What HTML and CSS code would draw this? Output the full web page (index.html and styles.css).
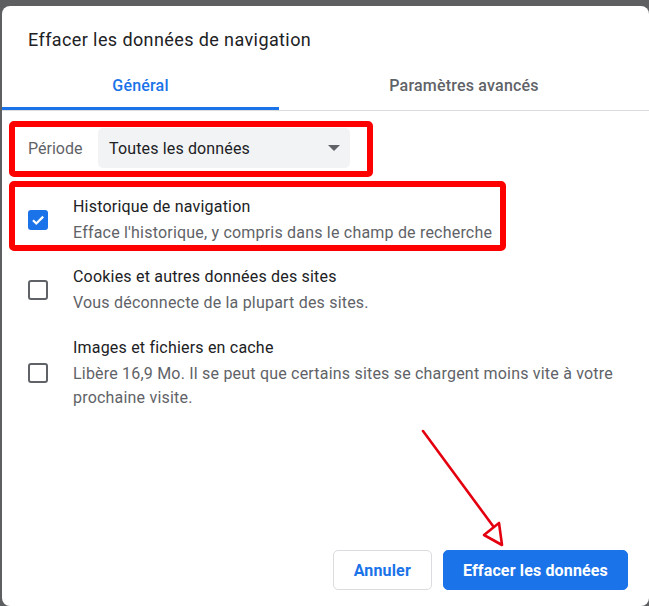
FILE: index.html
```html
<!DOCTYPE html>
<html lang="fr">
<head>
<meta charset="utf-8">
<title>Effacer les données de navigation</title>
<link rel="stylesheet" href="styles.css">
</head>
<body>
<div class="dialog">
  <h1 class="title">Effacer les données de navigation</h1>
  <div class="tabs">
    <div class="tab tab-active">Général</div>
    <div class="tab">Paramètres avancés</div>
  </div>

  <div class="mark mark-period">
    <div class="period">
      <span class="period-label">Période</span>
      <div class="select">
        <span>Toutes les données</span>
        <span class="caret"></span>
      </div>
    </div>
  </div>

  <div class="mark mark-history">
    <div class="row">
      <span class="checkbox checked">
        <svg viewBox="0 0 20 20" width="20" height="20"><path d="M5 10.2l3.3 3.3L15.2 6.6" fill="none" stroke="#fff" stroke-width="2.2"/></svg>
      </span>
      <div class="row-text">
        <div class="row-title">Historique de navigation</div>
        <div class="row-sub">Efface l'historique, y compris dans le champ de recherche</div>
      </div>
    </div>
  </div>

  <div class="row row-plain row-cookies">
    <span class="checkbox"></span>
    <div class="row-text">
      <div class="row-title">Cookies et autres données des sites</div>
      <div class="row-sub">Vous déconnecte de la plupart des sites.</div>
    </div>
  </div>

  <div class="row row-plain row-cache">
    <span class="checkbox"></span>
    <div class="row-text">
      <div class="row-title">Images et fichiers en cache</div>
      <div class="row-sub">Libère 16,9 Mo. Il se peut que certains sites se chargent moins vite à votre prochaine visite.</div>
    </div>
  </div>

  <div class="footer">
    <button class="btn btn-cancel">Annuler</button>
    <button class="btn btn-primary">Effacer les données</button>
  </div>
</div>

<svg class="arrow" viewBox="0 0 649 606" width="649" height="606">
  <line x1="423" y1="431" x2="493" y2="526" stroke="#e4000f" stroke-width="2.6" stroke-linecap="round"/>
  <polygon points="484,535 499,523 502,545" fill="none" stroke="#e4000f" stroke-width="2.6" stroke-linejoin="round"/>
</svg>
</body>
</html>
```

FILE: styles.css
```css
html, body {
  margin: 0;
  padding: 0;
}
body {
  background: #5d5f61;
  width: 649px;
  height: 606px;
  overflow: hidden;
  position: relative;
  font-family: Roboto, "Liberation Sans", sans-serif;
  color: #202124;
}
.dialog {
  margin: 6px 0 0 2px;
  width: 647px;
  height: 600px;
  background: #fff;
  border-radius: 8px;
  display: flex;
  flex-direction: column;
  box-sizing: border-box;
}
.title {
  margin: 0;
  padding: 22px 0 0 26px;
  font-size: 18px;
  letter-spacing: 0.4px;
  font-weight: 400;
  line-height: 24px;
  color: #202124;
}
.tabs {
  display: flex;
  border-bottom: 1px solid #dadce0;
}
.tab {
  flex: 1;
  text-align: center;
  font-size: 16px;
  letter-spacing: 0.2px;
  font-weight: 500;
  line-height: 20px;
  padding: 24px 0 11px;
  color: #5f6368;
  border-bottom: 3px solid transparent;
}
.tab-active {
  flex: 0 0 277px;
  color: #1a73e8;
  border-bottom-color: #1a73e8;
}
.mark {
  border: 6px solid #ff0000;
  border-radius: 5px;
  align-self: flex-start;
  margin-left: 7px;
}
.mark-period {
  margin-top: 10px;
  padding: 1px 17px 3px 13px;
}
.period {
  display: flex;
  align-items: center;
  height: 40px;
}
.period-label {
  font-size: 16px;
  color: #5f6368;
  width: 70px;
}
.select {
  width: 252px;
  height: 40px;
  box-sizing: border-box;
  background: #f1f3f4;
  border-radius: 5px;
  display: flex;
  align-items: center;
  justify-content: space-between;
  padding: 0 10px 0 11px;
  font-size: 16px;
  letter-spacing: 0.15px;
  color: #202124;
}
.caret {
  width: 0;
  height: 0;
  border-left: 6px solid transparent;
  border-right: 6px solid transparent;
  border-top: 6px solid #5f6368;
}
.mark-history {
  margin-top: 4px;
  padding: 8px 8px 0 13px;
}
.row {
  display: flex;
  align-items: center;
  gap: 25px;
}
.row-plain {
  padding-left: 26px;
  padding-right: 20px;
}
.row-cookies {
  margin-top: 14px;
}
.row-cache {
  margin-top: 21px;
}
.checkbox {
  flex: 0 0 20px;
  width: 20px;
  height: 20px;
  box-sizing: border-box;
  border: 2px solid #5f6368;
  border-radius: 3px;
  display: block;
}
.checkbox.checked {
  border: none;
  background: #1a73e8;
}
.checkbox svg {
  display: block;
}
.row-title {
  font-size: 16px;
  letter-spacing: 0.2px;
  line-height: 24px;
  margin-bottom: 2px;
  color: #202124;
}
.row-sub {
  font-size: 16px;
  letter-spacing: 0.2px;
  line-height: 24px;
  color: #5f6368;
}
.footer {
  margin-top: auto;
  display: flex;
  justify-content: flex-end;
  gap: 11px;
  padding: 0 21px 16px 0;
}
.btn {
  height: 40px;
  border-radius: 5px;
  font-family: Roboto, "Liberation Sans", sans-serif;
  font-size: 16px;
  letter-spacing: 0.15px;
  font-weight: 700;
  padding: 0 20px;
  cursor: pointer;
}
.btn-cancel {
  background: #fff;
  color: #1a73e8;
  border: 1px solid #dadce0;
}
.btn-primary {
  background: #1a73e8;
  color: #fff;
  border: 1px solid #1a73e8;
  padding: 0 19px;
}
.arrow {
  position: absolute;
  left: 0;
  top: 0;
  pointer-events: none;
}
```
